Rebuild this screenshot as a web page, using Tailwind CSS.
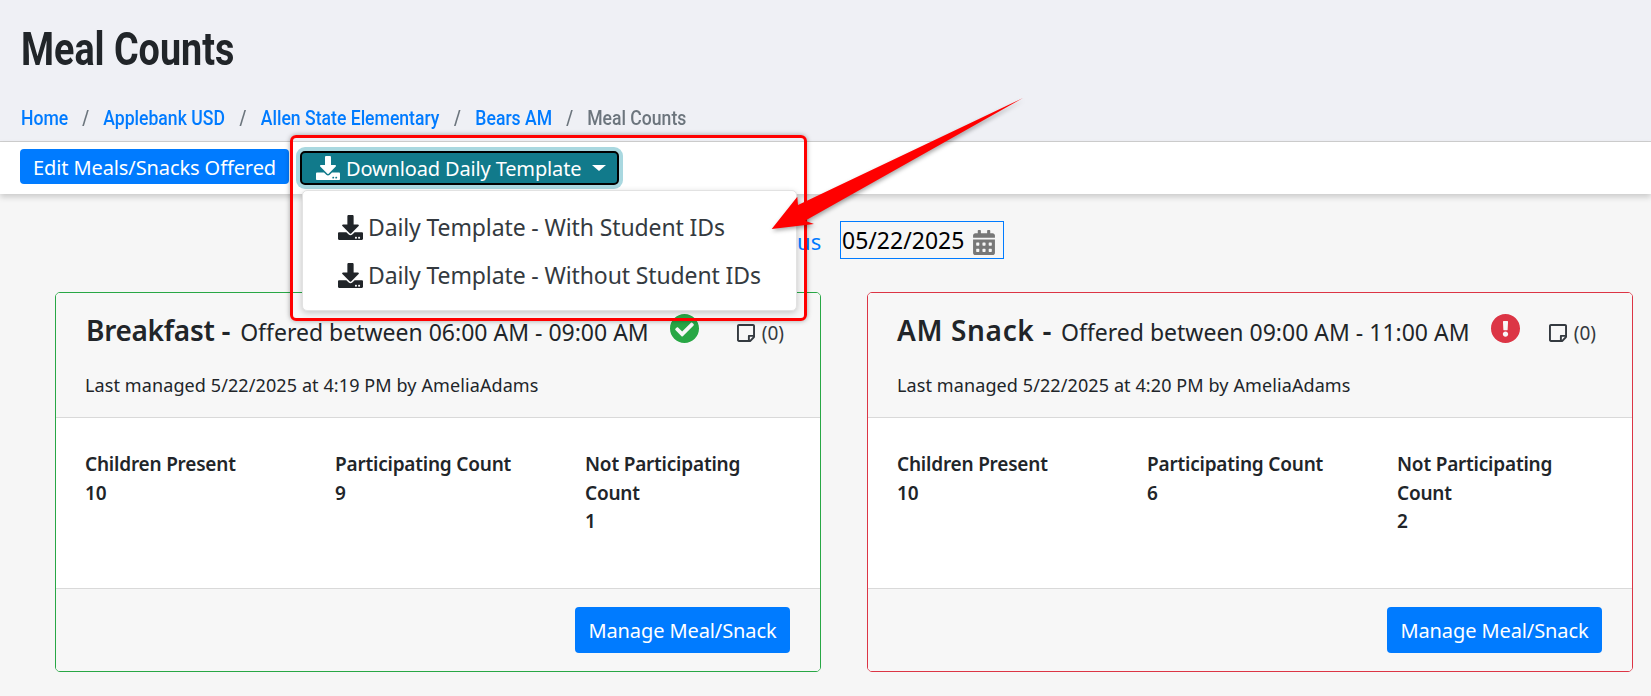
<!DOCTYPE html>
<html lang="en">

<head>
  <meta charset="UTF-8">
  <title>Meal Counts</title>
  <script src="https://cdn.jsdelivr.net/npm/@tailwindcss/browser@4"></script>
</head>

<body class="bg-[#f6f6f6] text-[#212529] font-['Noto_Sans','Open_Sans',sans-serif] h-[696px] overflow-hidden relative">
  <!-- page title + breadcrumb -->
  <div class="bg-[#eff0f5] h-[142px] border-b border-[#d0d0d0] pl-[21px] pt-[24px]">
    <h1 class="font-['Roboto',sans-serif] font-bold text-[46px] leading-[50px] text-[#212529] origin-left scale-x-[0.82] w-max">Meal Counts</h1>
    <nav class="mt-[32px] flex font-['Roboto',sans-serif] font-medium text-[20px] leading-[24px] text-[#6c757d] origin-left scale-x-[0.88] w-max">
      <a class="text-[#007bff]">Home</a><span class="px-[16px]">/</span>
      <a class="text-[#007bff]">Applebank USD</a><span class="px-[16.5px]">/</span>
      <a class="text-[#007bff]">Allen State Elementary</a><span class="px-[16.5px]">/</span>
      <a class="text-[#007bff]">Bears AM</a><span class="px-[16px]">/</span>
      <span>Meal Counts</span>
    </nav>
  </div>

  <!-- toolbar -->
  <div class="bg-white h-[52px] shadow-[0_3px_6px_rgba(0,0,0,0.18)] flex items-start pl-[20px] pt-[7px] relative">
    <button class="h-[35px] w-[269px] bg-[#007bff] text-white rounded-[4px] text-[20px] leading-[37px] tracking-[-0.1px]">Edit Meals/Snacks Offered</button>
    <button class="ml-[11px] mt-[2px] h-[34px] w-[319px] bg-[#117a8b] text-white rounded-[5px] border-2 border-black ring-4 ring-[#a9d8e0] text-[20px] flex items-center pl-[14px] gap-[6px]">
      <svg class="w-[24px] h-[24px]" viewBox="0 0 512 512" fill="#fff"><path d="M216 0h80c13.3 0 24 10.7 24 24v168h87.7c17.8 0 26.7 21.5 14.1 34.1L269.7 378.3c-7.5 7.5-19.8 7.5-27.3 0L90.1 226.1c-12.6-12.6-3.7-34.1 14.1-34.1H192V24c0-13.3 10.7-24 24-24zm296 376v112c0 13.3-10.7 24-24 24H24c-13.3 0-24-10.7-24-24V376c0-13.3 10.7-24 24-24h146.7l49 49c20.1 20.1 52.5 20.1 72.6 0l49-49H488c13.3 0 24 10.7 24 24zm-124 88c0-11-9-20-20-20s-20 9-20 20 9 20 20 20 20-9 20-20zm64 0c0-11-9-20-20-20s-20 9-20 20 9 20 20 20 20-9 20-20z"/></svg>
      <span class="pt-[2px] tracking-[-0.15px]">Download Daily Template</span>
      <span class="ml-[5px] w-0 h-0 border-x-[7px] border-x-transparent border-t-[6px] border-t-white"></span>
    </button>
  </div>

  <!-- date row -->
  <div class="h-[98px] flex items-start pl-[733px] pt-[27px]">
    <a class="w-[88px] mr-[19px] text-[22px] leading-[40px] text-[#007bff]">Previous</a>
    <div class="w-[164px] h-[38px] border border-[#007bff] flex items-center pl-[1px] gap-[9px] text-black text-[23px]">
      <span>05/22/2025</span>
      <svg class="w-[22px] h-[25px] mt-[5px]" viewBox="0 0 448 512" fill="#777"><path d="M0 464c0 26.5 21.5 48 48 48h352c26.5 0 48-21.5 48-48V192H0v272zm320-196c0-6.6 5.4-12 12-12h40c6.6 0 12 5.4 12 12v40c0 6.6-5.4 12-12 12h-40c-6.6 0-12-5.4-12-12v-40zm0 128c0-6.6 5.4-12 12-12h40c6.6 0 12 5.4 12 12v40c0 6.6-5.4 12-12 12h-40c-6.6 0-12-5.4-12-12v-40zM192 268c0-6.6 5.4-12 12-12h40c6.6 0 12 5.4 12 12v40c0 6.6-5.4 12-12 12h-40c-6.6 0-12-5.4-12-12v-40zm0 128c0-6.6 5.4-12 12-12h40c6.6 0 12 5.4 12 12v40c0 6.6-5.4 12-12 12h-40c-6.6 0-12-5.4-12-12v-40zM64 268c0-6.6 5.4-12 12-12h40c6.6 0 12 5.4 12 12v40c0 6.6-5.4 12-12 12H76c-6.6 0-12-5.4-12-12v-40zm0 128c0-6.6 5.4-12 12-12h40c6.6 0 12 5.4 12 12v40c0 6.6-5.4 12-12 12H76c-6.6 0-12-5.4-12-12v-40zM400 64h-48V16c0-8.8-7.2-16-16-16h-32c-8.8 0-16 7.2-16 16v48H160V16c0-8.8-7.2-16-16-16h-32c-8.8 0-16 7.2-16 16v48H48C21.5 64 0 85.5 0 112v48h448v-48c0-26.5-21.5-48-48-48z"/></svg>
    </div>
  </div>

  <!-- cards -->
  <div class="flex pl-[55px] gap-[46px]">
    <div class="w-[766px] h-[380px] rounded-[5px] border border-[#28a745] bg-white overflow-hidden flex flex-col">
      <div class="h-[125px] bg-[#f7f7f7] border-b border-[#d9d9d9] pl-[30px] pr-[36px] pt-[18px]">
        <div class="flex items-center h-[38px] justify-between">
          <div class="flex items-baseline">
            <span class="text-[28px] font-semibold tracking-[-0.3px]">Breakfast -</span>
            <span class="ml-[10px] text-[23px]">Offered between 06:00 AM - 09:00 AM</span>
            <svg class="ml-[21px] w-[29px] h-[29px] self-center -mt-[4px]" viewBox="8 8 496 496" fill="#28a745"><path d="M504 256c0 136.967-111.033 248-248 248S8 392.967 8 256 119.033 8 256 8s248 111.033 248 248zM227.314 387.314l184-184c6.248-6.248 6.248-16.379 0-22.627l-22.627-22.627c-6.248-6.249-16.379-6.249-22.628 0L216 308.118l-70.059-70.059c-6.248-6.248-16.379-6.248-22.628 0l-22.627 22.627c-6.248 6.248-6.248 16.379 0 22.627l104 104c6.249 6.249 16.379 6.249 22.628.001z"/></svg>
          </div>
          <div class="flex items-center gap-[7px] text-[19px] text-[#343a40] mt-[6px]">
            <svg class="w-[18px] h-[18px]" viewBox="0 32 448 448" fill="#343a40"><path d="M448 348.106V80c0-26.51-21.49-48-48-48H48C21.49 32 0 53.49 0 80v351.988c0 26.51 21.49 48 48 48h268.118a48 48 0 0 0 33.941-14.059l83.882-83.882A48 48 0 0 0 448 348.106zm-128 80v-76.118h76.118L320 428.106zM400 80v223.988H296c-13.255 0-24 10.745-24 24v104H48V80h352z"/></svg>
            <span>(0)</span>
          </div>
        </div>
        <p class="-ml-[1px] mt-[22px] text-[18px] leading-[28px] tracking-[0.1px]">Last managed 5/22/2025 at 4:19 PM by AmeliaAdams</p>
      </div>
      <div class="h-[171px] bg-white border-b border-[#d9d9d9] pl-[29px] pt-[32px] grid grid-cols-[190px_190px_190px] gap-x-[60px] text-[19px] leading-[28.7px] font-semibold tracking-[-0.2px]">
        <div>Children Present<br>10</div>
        <div>Participating Count<br>9</div>
        <div>Not Participating Count<br>1</div>
      </div>
      <div class="flex-1 bg-[#f7f7f7] flex justify-end items-start pt-[18px] pr-[30px]">
        <button class="w-[215px] h-[46px] pt-[2px] bg-[#007bff] text-white rounded-[4px] text-[20px] tracking-[-0.1px]">Manage Meal/Snack</button>
      </div>
    </div>

    <div class="w-[766px] h-[380px] rounded-[5px] border border-[#dc3545] bg-white overflow-hidden flex flex-col">
      <div class="h-[125px] bg-[#f7f7f7] border-b border-[#d9d9d9] pl-[29px] pr-[36px] pt-[18px]">
        <div class="flex items-center h-[38px] justify-between">
          <div class="flex items-baseline">
            <span class="text-[28px] font-semibold tracking-[0.65px]">AM Snack -</span>
            <span class="ml-[9px] text-[23px]">Offered between 09:00 AM - 11:00 AM</span>
            <svg class="ml-[21px] w-[29px] h-[29px] self-center -mt-[4px]" viewBox="8 8 496 496" fill="#dc3545"><path d="M504 256c0 136.997-111.043 248-248 248S8 392.997 8 256C8 119.083 119.043 8 256 8s248 111.083 248 248zm-248 50c-25.405 0-46 20.595-46 46s20.595 46 46 46 46-20.595 46-46-20.595-46-46-46zm-43.673-165.346l7.418 136c.347 6.364 5.609 11.346 11.982 11.346h48.546c6.373 0 11.635-4.982 11.982-11.346l7.418-136c.375-6.874-5.098-12.654-11.982-12.654h-63.383c-6.884 0-12.356 5.78-11.981 12.654z"/></svg>
          </div>
          <div class="flex items-center gap-[7px] text-[19px] text-[#343a40] mt-[6px]">
            <svg class="w-[18px] h-[18px]" viewBox="0 32 448 448" fill="#343a40"><path d="M448 348.106V80c0-26.51-21.49-48-48-48H48C21.49 32 0 53.49 0 80v351.988c0 26.51 21.49 48 48 48h268.118a48 48 0 0 0 33.941-14.059l83.882-83.882A48 48 0 0 0 448 348.106zm-128 80v-76.118h76.118L320 428.106zM400 80v223.988H296c-13.255 0-24 10.745-24 24v104H48V80h352z"/></svg>
            <span>(0)</span>
          </div>
        </div>
        <p class="mt-[22px] text-[18px] leading-[28px] tracking-[0.1px]">Last managed 5/22/2025 at 4:20 PM by AmeliaAdams</p>
      </div>
      <div class="h-[171px] bg-white border-b border-[#d9d9d9] pl-[29px] pt-[32px] grid grid-cols-[190px_190px_190px] gap-x-[60px] text-[19px] leading-[28.7px] font-semibold tracking-[-0.2px]">
        <div>Children Present<br>10</div>
        <div>Participating Count<br>6</div>
        <div>Not Participating Count<br>2</div>
      </div>
      <div class="flex-1 bg-[#f7f7f7] flex justify-end items-start pt-[18px] pr-[30px]">
        <button class="w-[215px] h-[46px] pt-[2px] bg-[#007bff] text-white rounded-[4px] text-[20px] tracking-[-0.1px]">Manage Meal/Snack</button>
      </div>
    </div>
  </div>

  <!-- open dropdown -->
  <div class="absolute left-[302px] top-[190px] w-[495px] h-[121px] bg-white rounded-[5px] border border-[#e2e2e2] shadow-[0_2px_6px_rgba(0,0,0,0.2)] pl-[35px] pt-[12px] text-[23px] tracking-[-0.12px] leading-[48px] text-[#343a40]">
    <div class="flex items-center gap-[5px]">
      <svg class="w-[25px] h-[25px]" viewBox="0 0 512 512" fill="#212529"><path d="M216 0h80c13.3 0 24 10.7 24 24v168h87.7c17.8 0 26.7 21.5 14.1 34.1L269.7 378.3c-7.5 7.5-19.8 7.5-27.3 0L90.1 226.1c-12.6-12.6-3.7-34.1 14.1-34.1H192V24c0-13.3 10.7-24 24-24zm296 376v112c0 13.3-10.7 24-24 24H24c-13.3 0-24-10.7-24-24V376c0-13.3 10.7-24 24-24h146.7l49 49c20.1 20.1 52.5 20.1 72.6 0l49-49H488c13.3 0 24 10.7 24 24zm-124 88c0-11-9-20-20-20s-20 9-20 20 9 20 20 20 20-9 20-20zm64 0c0-11-9-20-20-20s-20 9-20 20 9 20 20 20 20-9 20-20z"/></svg>
      <span>Daily Template - With Student IDs</span>
    </div>
    <div class="flex items-center gap-[5px]">
      <svg class="w-[25px] h-[25px]" viewBox="0 0 512 512" fill="#212529"><path d="M216 0h80c13.3 0 24 10.7 24 24v168h87.7c17.8 0 26.7 21.5 14.1 34.1L269.7 378.3c-7.5 7.5-19.8 7.5-27.3 0L90.1 226.1c-12.6-12.6-3.7-34.1 14.1-34.1H192V24c0-13.3 10.7-24 24-24zm296 376v112c0 13.3-10.7 24-24 24H24c-13.3 0-24-10.7-24-24V376c0-13.3 10.7-24 24-24h146.7l49 49c20.1 20.1 52.5 20.1 72.6 0l49-49H488c13.3 0 24 10.7 24 24zm-124 88c0-11-9-20-20-20s-20 9-20 20 9 20 20 20 20-9 20-20zm64 0c0-11-9-20-20-20s-20 9-20 20 9 20 20 20 20-9 20-20z"/></svg>
      <span>Daily Template - Without Student IDs</span>
    </div>
  </div>

  <!-- annotation: red box + arrow -->
  <div class="absolute left-[290px] top-[135px] w-[517px] h-[186px] border-[3px] border-[#f00] rounded-[6px] shadow-[0_0_5px_rgba(0,0,0,0.35)]"></div>
  <svg class="absolute left-[760px] top-[90px] w-[280px] h-[150px]" viewBox="0 0 280 150" style="filter:drop-shadow(1px 2px 2px rgba(0,0,0,.35))"><path d="M263 8 L38 115 L37.3 106.7 L11.7 139 L54 134 L45 130.7 Z" fill="#f00"/></svg>
</body>

</html>
